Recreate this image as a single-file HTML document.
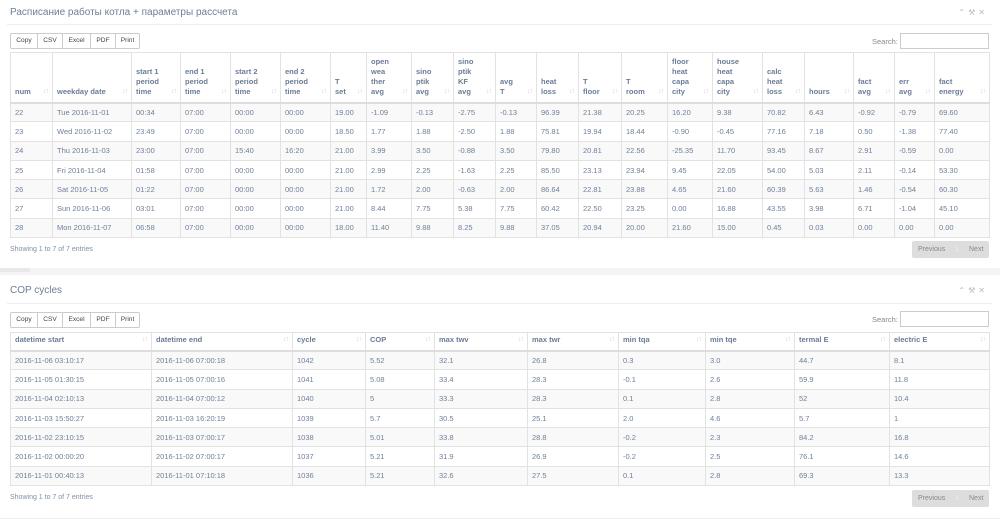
<!DOCTYPE html>
<html><head><meta charset="utf-8"><style>
*{box-sizing:border-box;margin:0;padding:0}
body{width:1000px;height:523px;background:#fff;font-family:"Liberation Sans",Arial,sans-serif;color:#6f809a;position:relative;overflow:hidden}
.title{position:absolute;left:10px;font-size:10px;color:#6d7f97}
.hline{position:absolute;left:7px;width:985px;height:1px;background:#eee}
.tools{position:absolute;right:12px;font-size:8px;color:#bbb;letter-spacing:3px}
.btns{position:absolute;left:10px;display:flex;border:1px solid #ccc;border-radius:2px;height:16px}
.btns span{font-size:6.6px;color:#444;line-height:14px;border-right:1px solid #ccc;text-align:center}
.btns span:last-child{border-right:none}
.search{position:absolute;left:872px;font-size:7.5px;color:#888}
.search i{position:absolute;left:28px;top:-4px;width:89px;height:16px;border:1px solid #ccc;display:block}
table{position:absolute;left:10px;border-collapse:collapse;table-layout:fixed;font-size:7.5px}
td,th{border:1px solid #e2e2e2;padding:0 4px;text-align:left;vertical-align:middle;white-space:nowrap}
th{font-weight:bold;color:#6a7c96;vertical-align:bottom;padding-bottom:5px;line-height:10px;position:relative;border-bottom:2px solid #ddd}
th:after{content:"↓↑";position:absolute;right:4px;bottom:5px;color:#d0d0d0;font-size:7px;letter-spacing:-1px;font-weight:normal}
tbody tr:nth-child(odd){background:#f9f9f9}
td{height:19.3px}
.info{position:absolute;left:10px;font-size:7px;color:#8090a5}
.pag{position:absolute;left:912px;width:77px;height:17px;background:#ddd;border-radius:2px;font-size:7px;color:#888;line-height:17px}
.pag b{font-weight:normal;position:absolute}
</style></head><body>

<div class="title" style="top:7px">Расписание работы котла + параметры рассчета</div>
<div class="tools" style="top:8px">⌃⚒✕</div>
<div class="hline" style="top:24px"></div>
<div class="btns" style="top:33px"><span style="width:27px">Copy</span><span style="width:25px">CSV</span><span style="width:28px">Excel</span><span style="width:25px">PDF</span><span style="width:23px">Print</span></div>
<div class="search" style="top:37px">Search:<i></i></div>

<table style="top:52px;width:979px">
<colgroup><col style="width:42px"><col style="width:79px"><col style="width:49px"><col style="width:50px"><col style="width:50px"><col style="width:50px"><col style="width:36px"><col style="width:45px"><col style="width:42px"><col style="width:42px"><col style="width:41px"><col style="width:42px"><col style="width:43px"><col style="width:46px"><col style="width:45px"><col style="width:50px"><col style="width:42px"><col style="width:49px"><col style="width:41px"><col style="width:40px"><col style="width:55px"></colgroup>
<thead><tr style="height:50px"><th>num</th><th>weekday date</th><th>start 1<br>period<br>time</th><th>end 1<br>period<br>time</th><th>start 2<br>period<br>time</th><th>end 2<br>period<br>time</th><th>T<br>set</th><th>open<br>wea<br>ther<br>avg</th><th>sino<br>ptik<br>avg</th><th>sino<br>ptik<br>KF<br>avg</th><th>avg<br>T</th><th>heat<br>loss</th><th>T<br>floor</th><th>T<br>room</th><th>floor<br>heat<br>capa<br>city</th><th>house<br>heat<br>capa<br>city</th><th>calc<br>heat<br>loss</th><th>hours</th><th>fact<br>avg</th><th>err<br>avg</th><th>fact<br>energy</th></tr></thead>
<tbody>
<tr><td>22</td><td>Tue 2016-11-01</td><td>00:34</td><td>07:00</td><td>00:00</td><td>00:00</td><td>19.00</td><td>-1.09</td><td>-0.13</td><td>-2.75</td><td>-0.13</td><td>96.39</td><td>21.38</td><td>20.25</td><td>16.20</td><td>9.38</td><td>70.82</td><td>6.43</td><td>-0.92</td><td>-0.79</td><td>69.60</td></tr>
<tr><td>23</td><td>Wed 2016-11-02</td><td>23:49</td><td>07:00</td><td>00:00</td><td>00:00</td><td>18.50</td><td>1.77</td><td>1.88</td><td>-2.50</td><td>1.88</td><td>75.81</td><td>19.94</td><td>18.44</td><td>-0.90</td><td>-0.45</td><td>77.16</td><td>7.18</td><td>0.50</td><td>-1.38</td><td>77.40</td></tr>
<tr><td>24</td><td>Thu 2016-11-03</td><td>23:00</td><td>07:00</td><td>15:40</td><td>16:20</td><td>21.00</td><td>3.99</td><td>3.50</td><td>-0.88</td><td>3.50</td><td>79.80</td><td>20.81</td><td>22.56</td><td>-25.35</td><td>11.70</td><td>93.45</td><td>8.67</td><td>2.91</td><td>-0.59</td><td>0.00</td></tr>
<tr><td>25</td><td>Fri 2016-11-04</td><td>01:58</td><td>07:00</td><td>00:00</td><td>00:00</td><td>21.00</td><td>2.99</td><td>2.25</td><td>-1.63</td><td>2.25</td><td>85.50</td><td>23.13</td><td>23.94</td><td>9.45</td><td>22.05</td><td>54.00</td><td>5.03</td><td>2.11</td><td>-0.14</td><td>53.30</td></tr>
<tr><td>26</td><td>Sat 2016-11-05</td><td>01:22</td><td>07:00</td><td>00:00</td><td>00:00</td><td>21.00</td><td>1.72</td><td>2.00</td><td>-0.63</td><td>2.00</td><td>86.64</td><td>22.81</td><td>23.88</td><td>4.65</td><td>21.60</td><td>60.39</td><td>5.63</td><td>1.46</td><td>-0.54</td><td>60.30</td></tr>
<tr><td>27</td><td>Sun 2016-11-06</td><td>03:01</td><td>07:00</td><td>00:00</td><td>00:00</td><td>21.00</td><td>8.44</td><td>7.75</td><td>5.38</td><td>7.75</td><td>60.42</td><td>22.50</td><td>23.25</td><td>0.00</td><td>16.88</td><td>43.55</td><td>3.98</td><td>6.71</td><td>-1.04</td><td>45.10</td></tr>
<tr><td>28</td><td>Mon 2016-11-07</td><td>06:58</td><td>07:00</td><td>00:00</td><td>00:00</td><td>18.00</td><td>11.40</td><td>9.88</td><td>8.25</td><td>9.88</td><td>37.05</td><td>20.94</td><td>20.00</td><td>21.60</td><td>15.00</td><td>0.45</td><td>0.03</td><td>0.00</td><td>0.00</td><td>0.00</td></tr>
</tbody></table>
<div class="info" style="top:246px">Showing 1 to 7 of 7 entries</div>
<div class="pag" style="top:241px"><b style="left:6px">Previous</b><b style="left:43px;color:#eee">1</b><b style="left:57px">Next</b></div>

<div style="position:absolute;left:0;top:268px;width:1000px;height:7px;background:#f4f4f4"></div>
<div style="position:absolute;left:0;top:268px;width:30px;height:4px;background:#e8e8e8"></div>

<div class="title" style="top:285px">COP cycles</div>
<div class="tools" style="top:286px">⌃⚒✕</div>
<div class="hline" style="top:303px"></div>
<div class="btns" style="top:312px"><span style="width:27px">Copy</span><span style="width:25px">CSV</span><span style="width:28px">Excel</span><span style="width:25px">PDF</span><span style="width:23px">Print</span></div>
<div class="search" style="top:315px">Search:<i></i></div>

<table style="top:332px;width:979px">
<colgroup><col style="width:141px"><col style="width:141px"><col style="width:73px"><col style="width:69px"><col style="width:93px"><col style="width:91px"><col style="width:87px"><col style="width:89px"><col style="width:95px"><col style="width:100px"></colgroup>
<thead><tr style="height:18px"><th>datetime start</th><th>datetime end</th><th>cycle</th><th>COP</th><th>max twv</th><th>max twr</th><th>min tqa</th><th>min tqe</th><th>termal E</th><th>electric E</th></tr></thead>
<tbody>
<tr><td>2016-11-06 03:10:17</td><td>2016-11-06 07:00:18</td><td>1042</td><td>5.52</td><td>32.1</td><td>26.8</td><td>0.3</td><td>3.0</td><td>44.7</td><td>8.1</td></tr>
<tr><td>2016-11-05 01:30:15</td><td>2016-11-05 07:00:16</td><td>1041</td><td>5.08</td><td>33.4</td><td>28.3</td><td>-0.1</td><td>2.6</td><td>59.9</td><td>11.8</td></tr>
<tr><td>2016-11-04 02:10:13</td><td>2016-11-04 07:00:12</td><td>1040</td><td>5</td><td>33.3</td><td>28.3</td><td>0.1</td><td>2.8</td><td>52</td><td>10.4</td></tr>
<tr><td>2016-11-03 15:50:27</td><td>2016-11-03 16:20:19</td><td>1039</td><td>5.7</td><td>30.5</td><td>25.1</td><td>2.0</td><td>4.6</td><td>5.7</td><td>1</td></tr>
<tr><td>2016-11-02 23:10:15</td><td>2016-11-03 07:00:17</td><td>1038</td><td>5.01</td><td>33.8</td><td>28.8</td><td>-0.2</td><td>2.3</td><td>84.2</td><td>16.8</td></tr>
<tr><td>2016-11-02 00:00:20</td><td>2016-11-02 07:00:17</td><td>1037</td><td>5.21</td><td>31.9</td><td>26.9</td><td>-0.2</td><td>2.5</td><td>76.1</td><td>14.6</td></tr>
<tr><td>2016-11-01 00:40:13</td><td>2016-11-01 07:10:18</td><td>1036</td><td>5.21</td><td>32.6</td><td>27.5</td><td>0.1</td><td>2.8</td><td>69.3</td><td>13.3</td></tr>
</tbody></table>
<div class="info" style="top:494px">Showing 1 to 7 of 7 entries</div>
<div class="pag" style="top:490px"><b style="left:6px">Previous</b><b style="left:43px;color:#eee">1</b><b style="left:57px">Next</b></div>
<div class="hline" style="top:518px;left:0;width:1000px"></div>
</body></html>
